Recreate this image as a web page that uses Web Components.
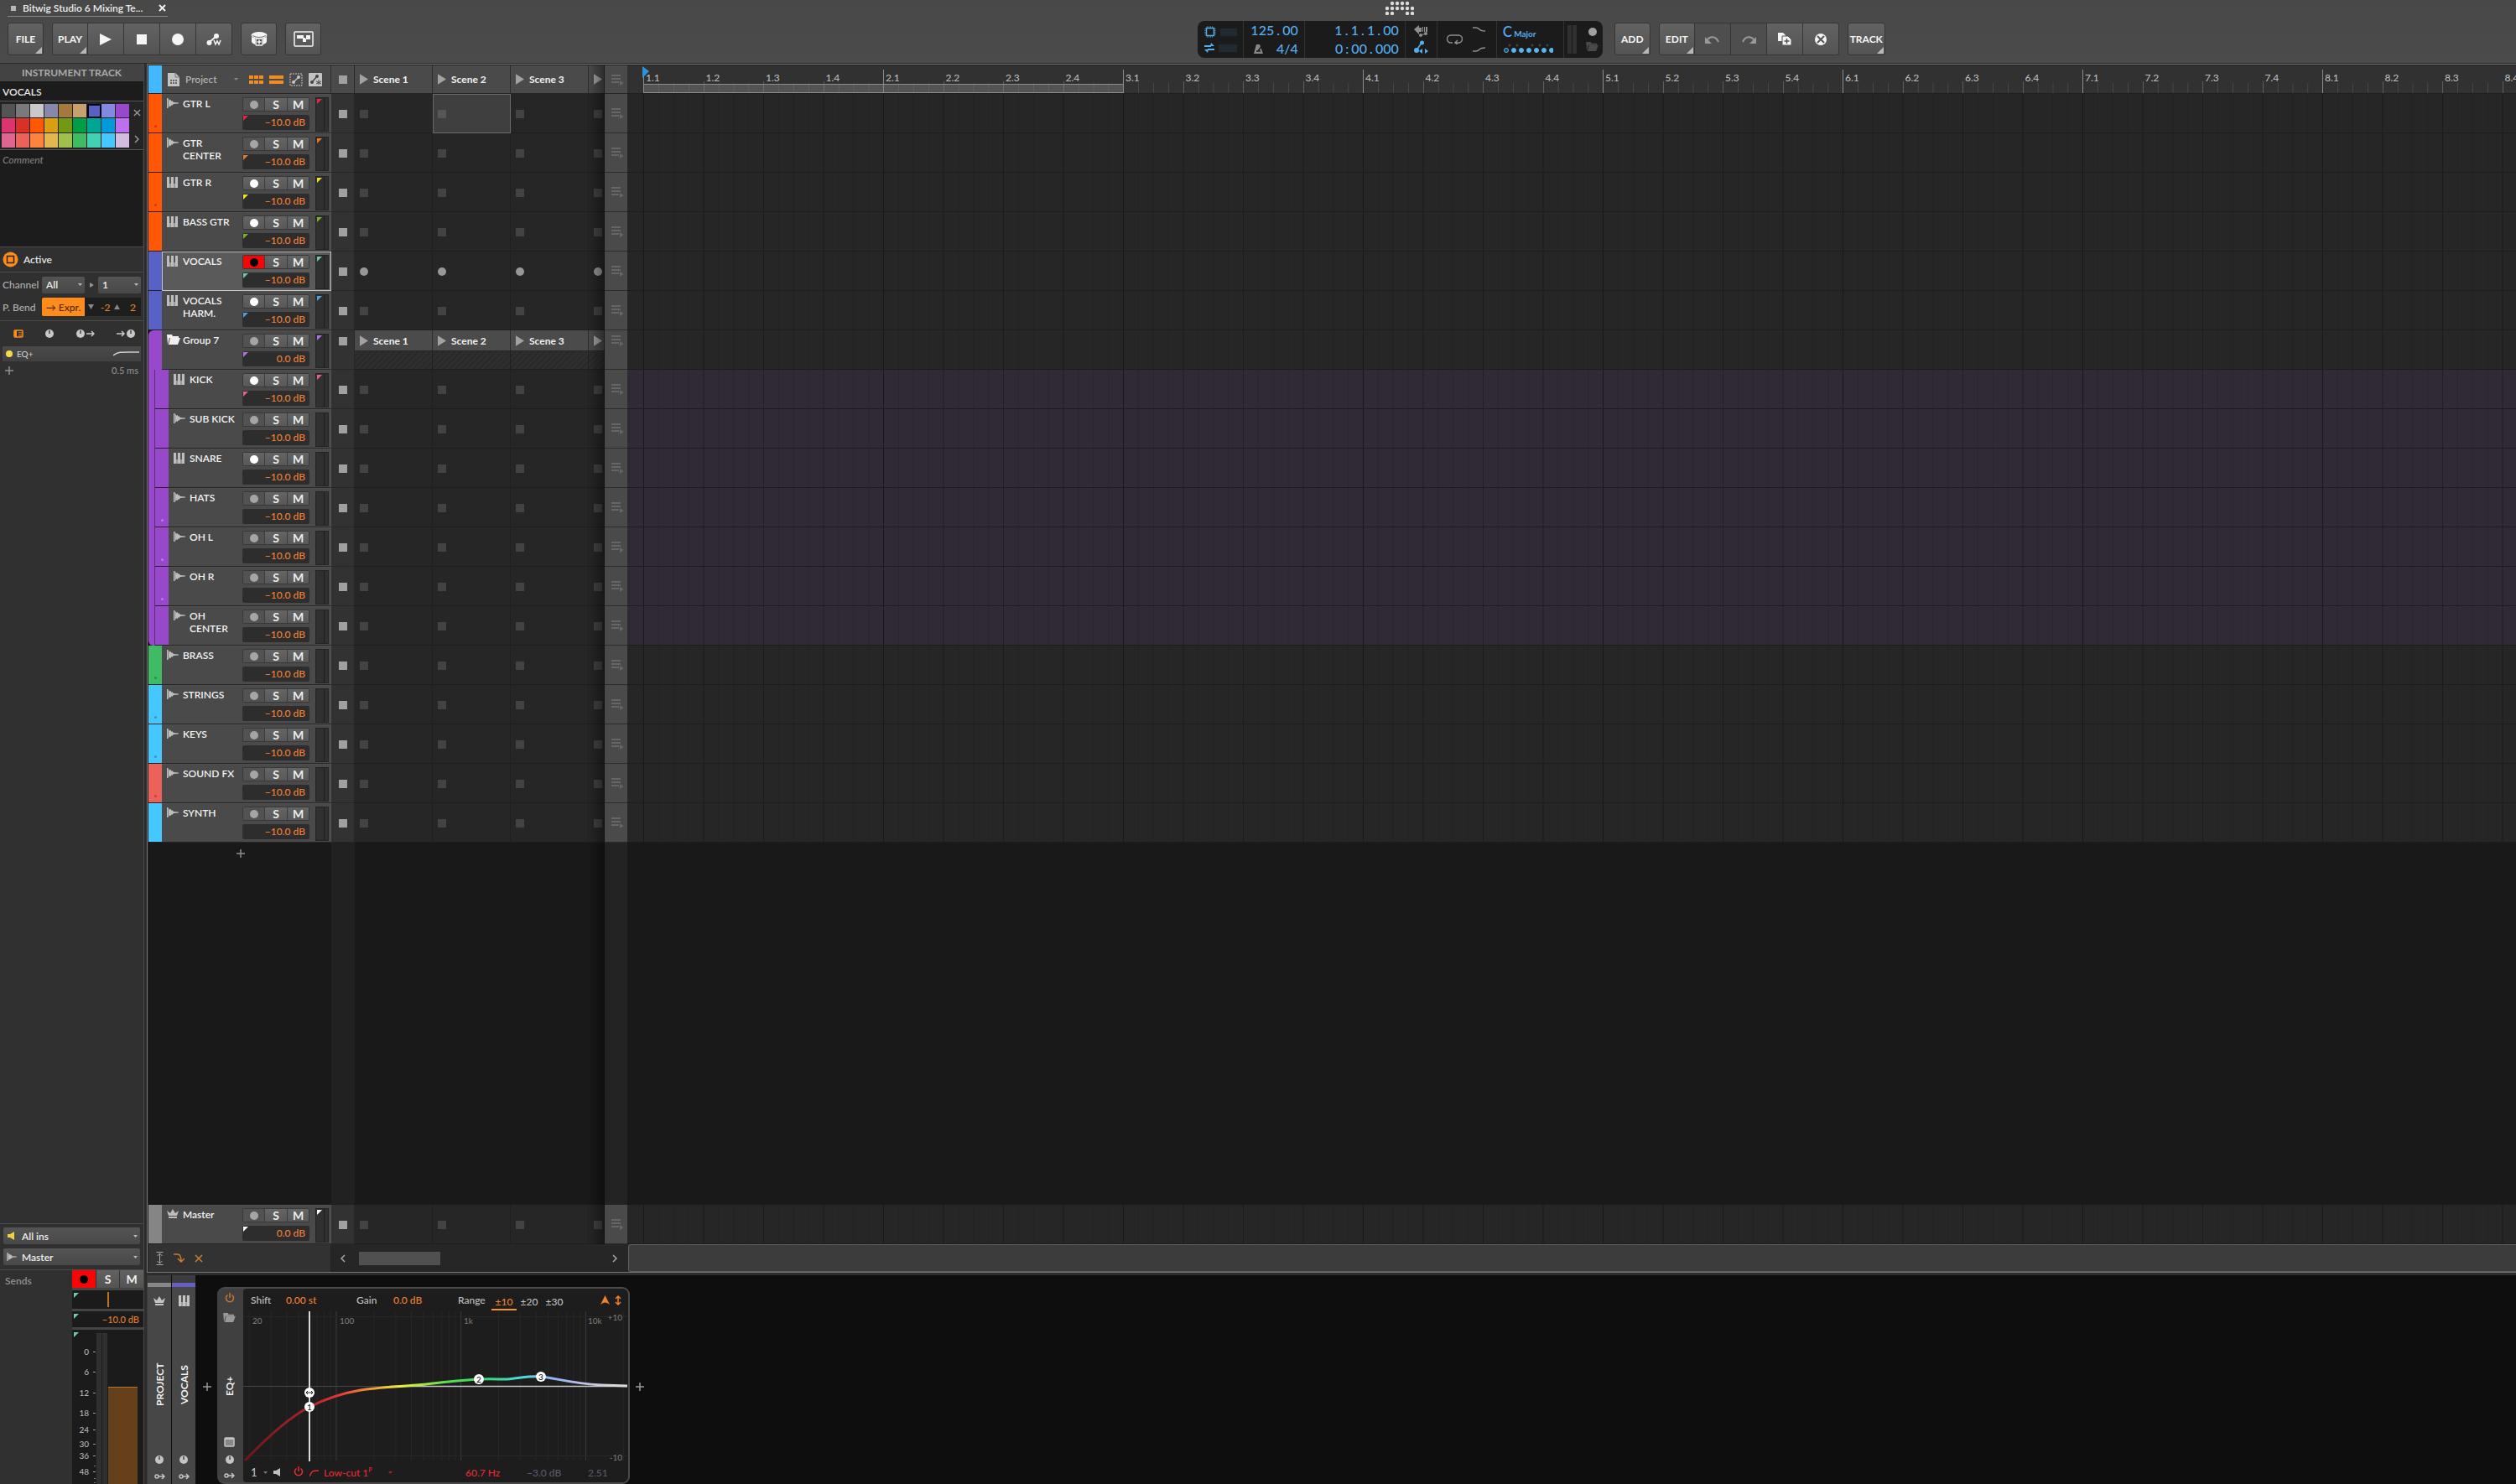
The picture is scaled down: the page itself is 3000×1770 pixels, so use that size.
<!DOCTYPE html>
<html lang="en">
<head>
<meta charset="utf-8">
<title>Bitwig Studio 6 Mixing Template</title>
<style>
html,body{margin:0;height:100%;overflow:hidden;background:#2c2c2c}
body{font:500 12px/15px Lato,"Open Sans",sans-serif;color:#e6e6e6}
</style>
</head>
<body>
<daw-app></daw-app>
<script>
const BASE = `
*{box-sizing:border-box}
button,input,select,textarea{font:inherit;color:inherit;margin:0;padding:0;border:0;background:none;border-radius:0;outline:0}
button{display:flex;align-items:center;justify-content:center;cursor:pointer}
svg{display:block}
`;
function define(name, css, html) {
  customElements.define(name, class extends HTMLElement {
    connectedCallback() {
      if (this.shadowRoot) return;
      const root = this.attachShadow({mode: 'open'});
      root.innerHTML = `<style>${BASE}${css}</style>` + (typeof html === 'function' ? html(this) : html);
    }
  });
}

/* ---------- icons ---------- */
const knob = (x, y) => `<circle cx="${x}" cy="${y}" r="5" fill="currentColor"/><path d="M${x} ${y}V${y-4}" stroke="#444" stroke-width="1.500"/>`;
const ICONS = {
  play: [14, 14, '<path d="M0 0L14 7L0 14z" fill="currentColor"/>'],
  stop: [12, 12, '<path d="M0 0h12v12H0z" fill="currentColor"/>'],
  rec: [14, 14, '<circle cx="7" cy="7" r="7" fill="currentColor"/>'],
  autow: [18, 16, '<path d="M3 12L12 4" stroke="currentColor" stroke-width="2"/><circle cx="3.500" cy="12" r="3" fill="currentColor"/><circle cx="12" cy="4" r="3" fill="currentColor"/><path d="M9 9l2 5l2-4l2 4l2-5" stroke="currentColor" fill="none" stroke-width="1.500"/>'],
  drum: [20, 17, '<ellipse cx="10" cy="4" rx="9.500" ry="4" fill="currentColor"/><path d="M2 4.500q8 4 16 0" stroke="#777" fill="none"/><path d="M1 6q9 4 18 0v6q-1 2-4 3V8H5v7q-3-1-4-3z" fill="currentColor"/><rect x="6" y="8" width="8" height="8" rx="1" fill="#505050" stroke="currentColor" stroke-width="1.500"/><path d="M10 9.500v5M7.500 12h5" stroke="currentColor" stroke-width="1.500"/>'],
  mixwin: [24, 19, '<rect x="1" y="1" width="22" height="17" rx="1" fill="none" stroke="currentColor" stroke-width="1.500"/><path d="M4 5h8v4H4z M15 5h5v5h-5z M12 8h2v1h1v4h-4V9h1z" fill="currentColor"/>'],
  undo: [18, 12, '<path d="M2 8C4 3 12 0 16 9" stroke="currentColor" stroke-width="2" fill="none"/><path d="M0 3v8h8z" fill="currentColor"/>'],
  redo: [18, 12, '<path d="M16 8C14 3 6 0 2 9" stroke="currentColor" stroke-width="2" fill="none"/><path d="M18 3v8h-8z" fill="currentColor"/>'],
  dup: [16, 15, '<path d="M0 0h6l3 3v7H0z" fill="currentColor"/><path d="M5 4h7l4 4v7H5z" fill="currentColor" stroke="#555" stroke-width="1"/><path d="M10.500 7v6M7.500 10h6" stroke="#555" stroke-width="1.500"/>'],
  del: [14, 14, '<circle cx="7" cy="7" r="7" fill="currentColor"/><path d="M3 3l8 8M11 3l-8 8" stroke="#555" stroke-width="2"/>'],
  wave: [14, 12, '<path d="M0 0h1.500v12H0z M2 1l2 2V1.500l2 2.500V3l2 2l6 .5v1L8 7L6 9V8l-2 2.500V9l-2 2z" fill="currentColor"/>'],
  piano: [13, 13, '<path d="M0 0h13v13H0z" fill="currentColor"/><path d="M3 0h2v8H3z M8 0h2v8H8z" fill="#555"/><path d="M4 8v5M9 8v5" stroke="#777"/>'],
  folder: [16, 12, '<path d="M0 0h6l1 2h7v2H3L1 12z" fill="currentColor"/><path d="M4 4h12l-3 8H2z" fill="currentColor"/>'],
  crown: [14, 11, '<path d="M0 2l4 3l3-5l3 5l4-3l-2 6H2z M2 9h10v2H2z" fill="currentColor"/>'],
  doc: [14, 16, '<path d="M0 0h9l5 5v11H0z" fill="currentColor"/><path d="M9 0v5h5" stroke="#777" fill="none"/><path d="M3 9h8M3 12h8" stroke="#666" stroke-width="2" stroke-dasharray="2 1"/>'],
  gridview: [17, 10, '<path d="M0 0h5v4H0zM6 0h5v4H6zM12 0h5v4h-5zM0 6h5v4H0zM6 6h5v4H6zM12 6h5v4h-5z" fill="#f28c1e"/>'],
  barview: [17, 10, '<path d="M0 0h17v4H0zM0 6h17v4H0z" fill="#f28c1e"/>'],
  autodash: [16, 16, '<rect x="1" y="1" width="14" height="14" fill="none" stroke="currentColor" stroke-dasharray="2 1"/><path d="M5 11L11 5" stroke="currentColor" stroke-width="1.500"/><circle cx="5" cy="11" r="2" fill="currentColor"/><circle cx="11" cy="5" r="2" fill="currentColor"/>'],
  autofill: [16, 16, '<rect width="16" height="16" rx="1" fill="currentColor"/><path d="M4 11L10 4" stroke="#444" stroke-width="1.500"/><circle cx="4" cy="11" r="2" fill="#444"/><circle cx="10" cy="4" r="2" fill="#444"/><path d="M12 8v6M9 10l6 3M15 10l-6 3" stroke="#444"/>'],
  list: [14, 14, '<path d="M0 1h11v2H0zM0 5h11v2H0zM0 9h9v2H0zM10 8l5 3l-5 3z" fill="currentColor"/>'],
  tri: [11, 14, '<path d="M0 0L11 7L0 14z" fill="currentColor"/>'],
  caret: [5, 3, '<path d="M0 0h5L2.500 3z" fill="currentColor"/>'],
  arrowdown: [7, 6, '<path d="M0 0h7L3.500 6z" fill="currentColor"/>'],
  arrowup: [7, 6, '<path d="M0 6h7L3.500 0z" fill="currentColor"/>'],
  close: [9, 9, '<path d="M1 1l7 7M8 1l-7 7" stroke="currentColor" stroke-width="2"/>'],
  thinx: [10, 10, '<path d="M1 1l8 8M9 1l-8 8" stroke="currentColor" stroke-width="1.500"/>'],
  right: [6, 10, '<path d="M1 1l4 4l-4 4" stroke="currentColor" stroke-width="1.500" fill="none"/>'],
  left: [6, 10, '<path d="M5 1L1 5l4 4" stroke="currentColor" stroke-width="1.500" fill="none"/>'],
  plus: [10, 10, '<path d="M5 0v10M0 5h10" stroke="currentColor" stroke-width="1.500"/>'],
  active: [19, 19, '<circle cx="9.500" cy="9.500" r="9" fill="#ff8c1a"/><rect x="5.500" y="5.500" width="8" height="8" fill="#ff8c1a" stroke="#2a2010" stroke-width="1.500"/>'],
  io: [12, 10, '<rect x="1" y="1" width="10" height="8" rx="1" fill="none" stroke="#ff8c1a" stroke-width="1.500"/><path d="M1 1h3v8H1z" fill="#ff8c1a"/><path d="M6 3.500h4M6 5.500h4M6 7.500h4" stroke="#c96e18"/>'],
  knob: [10, 10, knob(5, 5)],
  knobout: [22, 10, knob(5, 5) + '<path d="M12 5h9M18 2l3 3l-3 3" stroke="currentColor" fill="none" stroke-width="1.500"/>'],
  knobin: [22, 10, knob(17, 5) + '<path d="M0 5h9M6 2l3 3l-3 3" stroke="currentColor" fill="none" stroke-width="1.500"/>'],
  eqcurve: [31, 6, '<path d="M0 5C6 0 10 1 31 1" stroke="currentColor" stroke-width="1.500" fill="none"/>'],
  speaker: [8, 10, '<path d="M0 3h3l5-3v10L3 7H0z" fill="currentColor"/>'],
  height: [9, 16, '<path d="M.5 .5h8M.5 15.500h8" stroke="currentColor"/><path d="M4.500 2v12" stroke="currentColor"/><path d="M1.500 5L4.500 2L7.500 5M1.500 11L4.500 14L7.500 11" stroke="currentColor" fill="none"/>'],
  follow: [13, 12, '<path d="M0 1h5q4 0 4 9M5 6l4 4l4-4" stroke="currentColor" stroke-width="1.500" fill="none"/>'],
  power: [12, 12, '<path d="M3.500 2.500a4.500 4.500 0 1 0 5 0M6 0v6" stroke="currentColor" stroke-width="1.500" fill="none"/>'],
  window: [13, 12, '<rect x="1" y="1" width="11" height="10" rx="1" fill="#888" stroke="currentColor" stroke-width="1.500"/><path d="M1 1h11v2H1z" fill="currentColor"/>'],
  mod: [13, 8, '<circle cx="3" cy="4" r="2" fill="none" stroke="currentColor" stroke-width="1.500"/><path d="M5 4h7M9 1l3 3l-3 3" stroke="currentColor" stroke-width="1.500" fill="none"/>'],
  peak: [11, 11, '<path d="M0 11L5.500 0L11 11q-5.500-5-11 0z" fill="currentColor"/>'],
  updown: [8, 12, '<path d="M4 1v10M1 4l3-3l3 3M1 8l3 3l3-3" stroke="currentColor" stroke-width="1.500" fill="none"/>'],
  lowcut: [11, 8, '<path d="M0 8C3 1 4 1 11 1" stroke="currentColor" stroke-width="1.500" fill="none"/>'],
  chip: [14, 14, '<path d="M2.500 2.500h9v9h-9z" fill="none" stroke="currentColor" stroke-width="1.500"/><path d="M3 1h8M3 13h8M1 3v8M13 3v8" stroke="currentColor" stroke-dasharray="1 1"/>'],
  swap: [12, 12, '<path d="M0 3h8v2H0zM4 7h8v2H4z" fill="currentColor"/><path d="M8 0l4 4H7zM4 12L0 8h5z" fill="currentColor"/>'],
  metro: [12, 12, '<path d="M0 12L3 1h4l4 11z" fill="currentColor"/><path d="M5 9L10 2M3 9h5" stroke="#1c1c1c" stroke-width="1.500"/>'],
  overdub: [17, 14, '<path d="M0 5l6-5v3h3v5H6v3zM10 2h1v6h-1zM12 2h1v6h-1zM14 2h2v6h-2z" fill="currentColor"/><path d="M7 12l8-2" stroke="currentColor"/><circle cx="8" cy="12" r="2" fill="currentColor"/><circle cx="14" cy="10" r="2" fill="currentColor"/>'],
  autoblue: [17, 16, '<path d="M3 12L9 3" stroke="currentColor" stroke-width="1.500"/><circle cx="3" cy="12" r="3" fill="currentColor"/><circle cx="9.500" cy="3" r="2.500" fill="currentColor"/><path d="M6 13l4-3v6zM17 13l-4-3v6z" fill="currentColor"/>'],
  loop: [19, 12, '<path d="M7 10H5a4 4 0 0 1 0-9h9a4 4 0 0 1 0 9h-3M13 7l-3 3l3 2" stroke="currentColor" stroke-width="1.500" fill="none"/>'],
  punchin: [15, 6, '<path d="M0 1h4q2 0 4 2t7 2" stroke="currentColor" stroke-width="1.500" fill="none"/>'],
  punchout: [15, 6, '<path d="M0 5h4q2 0 4-2t7-2" stroke="currentColor" stroke-width="1.500" fill="none"/>'],
  scale: [60, 12, Array.from({length: 7}, (_, i) => `<circle cx="${4 + i * 9}" cy="8" r="2.500" fill="${i ? '#5bb5ee' : '#245'}" stroke="#5bb5ee"/>`).join('') + [8, 17, 35, 44, 53].map(x => `<circle cx="${x}" cy="2" r="1.500" fill="#444"/>`).join('')],
  logo: [34, 17, [[1,2,3,4], [0,1,2,3,4,5], [0,1,4,5]].map((r, y) => r.map(x => `<circle cx="${2 + x * 6}" cy="${3 + y * 6}" r="2.200" fill="currentColor"/>`).join('')).join('')]
};
define('ui-icon', ':host{display:inline-block;flex:none}', el => {
  const [w, h, body] = ICONS[el.getAttribute('name')];
  const s = +(el.getAttribute('size') || w), t = Math.round(h * s / w);
  return `<svg width="${s}" height="${t}" viewBox="0 0 ${w} ${h}" aria-hidden="true">${body}</svg>`;
});
const ic = (n, s, st) => `<ui-icon name="${n}"${s ? ` size="${s}"` : ''}${st ? ` style="${st}"` : ''}></ui-icon>`;

/* ---------- header ---------- */
define('tool-button', `
:host{display:block;width:43px;height:39px;flex:none}
:host([wide]){width:45px}
button{width:100%;height:100%;position:relative;font-weight:700;color:#f5f5f5;background:linear-gradient(#626262,#545454);border:1px solid #363636;border-left-width:0}
:host([first]) button{border-left-width:1px;border-radius:3px 0 0 3px}
:host([last]) button{border-radius:0 3px 3px 0}
:host([first][last]) button{border-radius:3px}
:host([off]) button{background:#4e4e4e;color:#999}
:host([menu]) button::after{content:"";position:absolute;right:1px;bottom:1px;border:4px solid;border-color:transparent #b8b8b8 #b8b8b8 transparent}
`, el => `<button${el.hasAttribute('label') ? ` aria-label="${el.getAttribute('label')}"` : ''}><slot></slot></button>`);

define('transport-display', `
:host{display:flex;height:44px;background:#1b1b1b;border-radius:8px;color:#55aef0;width:483px;overflow:hidden}
section{display:flex;flex-direction:column;justify-content:space-evenly;border-right:1px solid #333;padding:0 7px 0 8px}
section:last-child{border:0}
.r{display:flex;align-items:center;gap:5px}
.m{width:23px;height:9px;background:#1f2a31}
.n{font:500 16px/20px Lato,sans-serif;display:flex;justify-content:flex-end;align-items:center}
.n i{font-style:normal;display:inline-block;width:10px;text-align:center}
.g{color:#8e8e8e}
`, `
<section style="width:55px"><div class="r">${ic('chip')}<div class="m"></div></div><div class="r">${ic('swap')}<div class="m"></div></div></section>
<section style="width:73px"><div class="n">125<i>.</i>00</div><div class="n" style="justify-content:space-between;padding-left:4px">${ic('metro',0,'color:#888')}<span>4/4</span></div></section>
<section style="width:120px"><div class="n">1<i>.</i>1<i>.</i>1<i>.</i>00</div><div class="n">0<i>:</i>00<i>.</i>000</div></section>
<section style="width:38px;align-items:center">${ic('overdub',0,'color:#8e8e8e')}${ic('autoblue')}</section>
<section class="g" style="width:71px;flex-direction:row;justify-content:space-between;align-items:center;padding:0 13px 0 11px">${ic('loop')}<div style="display:grid;gap:18px">${ic('punchin')}${ic('punchout')}</div></section>
<section style="width:80px;padding:0 7px"><div><span style="font-size:17px">C</span> <span style="font-size:10px;font-weight:700;margin-left:-1px">Major</span></div>${ic('scale')}</section>
<section style="width:46px;flex-direction:row;align-items:center;gap:6px;padding:0"><div style="width:11px;height:34px;background:linear-gradient(90deg,#303030 5px,#1b1b1b 5px 6px,#303030 6px)"></div><div style="display:grid;gap:7px;justify-items:center;color:#4a4a4a">${ic('rec',10,'color:#a0a0a0')}${ic('folder',15)}</div></section>
`);

define('app-header', `
:host{display:grid;grid-template-columns:auto 25fr auto auto 18fr;grid-template-rows:21px 54px;background:linear-gradient(#484848,#4b4b4b);border-bottom:1px solid #2a2a2a}
.tab{margin-left:9px;width:191px;display:flex;align-items:center;gap:8px;padding:0 2px 0 4px;border-bottom:1px solid #858585;height:20px;font-weight:600;color:#ececec}
.tab button{margin-left:auto;color:#f0f0f0}
.logo{grid-column:3;justify-self:center;color:#dcdcdc;padding-top:1px}
.bar{display:flex;gap:10px;padding:6px 0 0}
.grp{display:flex}
`, `
<div class="tab">${ic('stop',6,'color:#b5b5b5')}<span>Bitwig Studio 6 Mixing Te...</span><button aria-label="Close tab">${ic('close')}</button></div>
<div class="logo">${ic('logo')}</div>
<div class="bar" style="grid-row:2;grid-column:1;padding-left:9px">
<tool-button first last menu>FILE</tool-button>
<div class="grp"><tool-button first menu>PLAY</tool-button><tool-button label="Play">${ic('play')}</tool-button><tool-button label="Stop">${ic('stop')}</tool-button><tool-button label="Record">${ic('rec')}</tool-button><tool-button last label="Automation write">${ic('autow')}</tool-button></div>
<tool-button first last label="Drum pads">${ic('drum')}</tool-button>
<tool-button first last label="Mixer">${ic('mixwin')}</tool-button>
</div>
<div style="grid-row:2;grid-column:3;padding-top:4px"><transport-display></transport-display></div>
<div class="bar" style="grid-row:2;grid-column:4;padding-left:14px">
<tool-button first last menu>ADD</tool-button>
<div class="grp"><tool-button first menu>EDIT</tool-button><tool-button off label="Undo">${ic('undo')}</tool-button><tool-button off label="Redo">${ic('redo')}</tool-button><tool-button label="Duplicate">${ic('dup')}</tool-button><tool-button last label="Delete">${ic('del')}</tool-button></div>
<tool-button first last menu wide>TRACK</tool-button>
</div>
`);

/* ---------- inspector ---------- */
define('ui-select', `
:host{display:flex;align-items:center;height:20px;background:linear-gradient(#545454,#484848);border-radius:2px;padding:0 3px 0 5px;gap:5px;color:#bbb;font-weight:600}
select{appearance:none;flex:1;min-width:0;height:20px;color:#eee}
::slotted(*){width:17px}
`, el => `<slot></slot><select aria-label="${el.getAttribute('label')}"><option>${el.getAttribute('value')}</option></select>${ic('caret')}`);

const PAL = ['#545454','#7a7a7a','#c9c9c9','#8689ac','#a3793f','#c6a070','#5761c6','#8489e0','#9849cb',
 '#db3570','#d93128','#ff5706','#d99f10','#739914','#009d47','#00a694','#0099d9','#bc70f0',
 '#e16591','#ec6158','#ff833e','#e4b74e','#a0c04d','#3ebb63','#43d1b4','#44c8ff','#d4bce0'];
define('color-palette', `
:host{display:flex;background:#242424;padding:3px 0 1px 2px;height:59px}
.g{display:grid;grid-template-columns:repeat(9,17px);grid-template-rows:17px 18px 18px}
.g button{border-right:1px solid #222;border-bottom:1px solid #222}
.g button.on{border:2px solid #080810}
.s{display:flex;flex-direction:column;justify-content:space-between;align-items:center;flex:1;padding:6px 2px;color:#999}
`, `<div class="g">${PAL.map((c, i) => `<button class="${i === 6 ? 'on' : ''}" style="background:${c}" aria-label="${c}"></button>`).join('')}</div><div class="s"><button aria-label="Reset">${ic('thinx',9)}</button><button aria-label="More">${ic('right')}</button></div>`);

define('channel-strip', `
:host{display:flex;height:256px;border-top:1px solid #4a4a4a}
.sends{flex:1;padding:5px 6px;color:#929292;font-weight:600}
.mix{width:85px;display:flex;flex-direction:column;background:#444;gap:3px}
.b{display:flex;height:21px;gap:1px;background:#333}
.b button{flex:1;background:linear-gradient(#626262,#535353);font:700 14px/20px Lato,sans-serif;color:#eee}
.b .a{background:#f80606;color:#000}
.d{background:#1b1b1b;position:relative;flex:none}
.d::before{content:"";position:absolute;left:2px;top:3px;border:3px solid;border-color:#6fc9a4 transparent transparent #6fc9a4}
.p{height:22px;display:flex;justify-content:center;align-items:center}
.p i{width:2px;height:18px;background:#b8742c}
.v{height:19px;text-align:right;padding:2px 5px;color:#e07e2a;font-size:11px}
.f{flex:1;min-height:0;overflow:hidden}
`, () => {
  const L = [[0,26],[6,50],[12,75],[18,99],[24,119],[30,136],[36,150],[48,169]];
  return `<div class="sends">Sends</div><div class="mix"><div class="b"><button class="a" aria-label="Arm">${ic('rec',10)}</button><button>S</button><button>M</button></div>
<div class="d p"><i></i></div><div class="d v">−10.0 dB</div><div class="d f"><svg width="85" height="187">
<path d="M29 4h6v190h-6zM36 4h6v190h-6z" fill="#303030"/><path d="M43 68h35v120H43z" fill="#66401a"/><path d="M43 68.500h35" stroke="#b8742c"/>
${L.map(([t, y]) => `<text x="20" y="${y+4}" text-anchor="end" font-size="10" fill="#b4b4b4">${t}</text><path d="M25 ${y}.5h3" stroke="#999"/>`).join('')}<path d="M26 162.500h2M26 177.500h2M26 182.500h2" stroke="#777"/></svg></div></div>`;
});

define('track-inspector', `
:host{display:flex;flex-direction:column;width:172px;background:#303030;border-right:1px solid #484848}
h2{margin:0;font:700 12px/21px Lato,sans-serif;text-align:center;color:#aaa;background:#434343}
input.name{height:23px;background:#1c1c1c;width:100%;padding:0 3px;font-weight:600;border-top:1px solid #1a1a1a}
color-palette{border-top:1px solid #555;border-bottom:1px solid #555}
textarea{display:block;width:170px;height:115px;background:#1c1c1c;resize:none;padding:4px 3px;font-style:italic}
textarea::placeholder{color:#7d7d7d;opacity:1}
.row{display:flex;align-items:center}
.sec{border-top:1px solid #4a4a4a}
.l{width:47px;color:#b0b0b0}
.expr{width:51px;height:22px;background:#ff8c1a;color:#4a2a08;border-radius:2px 0 0 2px}
.pb{display:flex;align-items:center;width:67px;height:22px;background:#1e1e1e;color:#e8801e;padding:0 6px 0 4px;gap:4px}
.pb span{flex:1;text-align:right}
.pb ui-icon{color:#888}
.ico{height:31px;justify-content:space-between;padding:0 10px 0 16px;color:#c8c8c8}
.eq{margin:0 3px;height:18px;background:linear-gradient(#4a4a4a,#404040);padding:0 2px 0 4px;gap:5px;color:#d0d0d0;font-size:10px}
.lat{padding:3px 6px;justify-content:space-between;color:#8e8e8e;font-size:11px}
.fill{flex:1}
`, `
<h2>INSTRUMENT TRACK</h2>
<input class="name" aria-label="Track name" value="VOCALS">
<color-palette></color-palette>
<textarea aria-label="Comment" placeholder="Comment"></textarea>
<div class="row sec" style="height:30px;padding-left:3px;gap:6px;font-weight:600">${ic('active')}Active</div>
<div class="sec" style="padding:4px 3px 4px;height:58px;display:grid;gap:4px">
<div class="row"><span class="l">Channel</span><ui-select label="Channel from" value="All" style="width:51px"></ui-select><span style="width:16px;display:flex;justify-content:center;color:#999">${ic('tri',5)}</span><ui-select label="Channel to" value="1" style="width:51px"></ui-select></div>
<div class="row"><span class="l">P. Bend</span><button class="expr">→ Expr.</button><div class="pb">${ic('arrowdown')}<span>-2</span>${ic('arrowup')}<span>2</span></div></div>
</div>
<div class="row sec ico">${ic('io')}${ic('knob')}${ic('knobout')}${ic('knobin')}</div>
<div class="row eq"><svg width="8" height="8"><circle cx="4" cy="4" r="4" fill="#f7d94c"/></svg><span>EQ+</span>${ic('eqcurve',0,'margin-left:auto')}</div>
<div class="row lat">${ic('plus')}<span>0.5 ms</span></div>
<div class="fill"></div>
<div class="sec" style="padding:4px;height:55px;display:grid;gap:5px;align-content:start">
<ui-select label="Input" value="All ins" style="padding-left:0;gap:0">${ic('speaker',8,'color:#f0d040;margin-left:5px')}</ui-select>
<ui-select label="Output" value="Master" style="padding-left:0;gap:0">${ic('wave',12,'margin-left:4px;margin-right:1px')}</ui-select></div>
<channel-strip></channel-strip>
`);

/* ---------- arranger ---------- */
define('bar-lane', `
:host{display:flex;flex:1;min-width:0;overflow:hidden;padding-left:19px;background:var(--lane,#262626);border-bottom:1px solid #1d1d1d}
div{flex:none;width:286px;background-image:linear-gradient(90deg,#181818 1px,transparent 1px),linear-gradient(90deg,rgba(0,0,0,.2) 1px,transparent 1px),linear-gradient(90deg,rgba(0,0,0,.1) 1px,transparent 1px);background-size:100% 100%,25% 100%,calc(100%/16) 100%}
`, '<div></div>'.repeat(8));

const play = (t) => `<button class="sc">${ic('tri',10)}<span>${t}</span></button>`;
const LAUNCH = `
.launch{display:grid;grid-template-columns:93px 93px 93px 19px;width:298px;flex:none;position:relative}
.launch::after{content:"";position:absolute;right:0;top:0;bottom:0;width:19px;background:linear-gradient(90deg,rgba(0,0,0,.02),rgba(0,0,0,.4));pointer-events:none}
.sc{justify-content:flex-start;gap:6px;padding-left:6px;font-weight:700;color:#f0f0f0;background:#4b4b4b;border-right:1px solid #2a2a2a;overflow:hidden;white-space:nowrap;min-width:0}
.sc ui-icon{color:#a2a2a2}
.stop{width:28px;flex:none;display:flex;align-items:center;justify-content:center;color:#a0a0a0;border-right:1px solid #262626}
.ls{width:27px;flex:none;display:flex;align-items:center;justify-content:center;background:#4a4a4a;color:#666;border-bottom:1px solid #2c2c2c;padding-left:2px}
`;
define('track-row', LAUNCH + `
:host{display:flex;height:47px;flex:none}
.strip{width:16px;flex:none;background:var(--c);border-bottom:1px solid #222;display:flex;align-items:flex-end;justify-content:center;padding-bottom:6px}
.strip i{width:3px;height:3px;border-radius:2px;background:rgba(0,0,0,.25)}
.outer{width:8px;flex:none;background:var(--c);border-right:1px solid #5b2c79}
:host([group]) .strip{border-radius:6px 0 0 0;border-bottom:0}
:host([kid]) .strip i{background:rgba(255,255,255,.3)}
:host([lastkid]) .outer{border-radius:0 0 0 6px}
.side{width:218px;display:flex;flex:none;background:#141414}
.head{flex:1;min-width:0;display:flex;background:#4a4a4a;border:1px solid #505050;border-bottom-color:#262626;padding:3px 2px 0 6px;border-left:0;color:#bdbdbd}
:host([sel]) .head{background:#5a5a5a;border:1px solid #c4c4c4;padding:3px 2px 0 5px}
.name{flex:1;min-width:0;padding-left:5px;color:#f2f2f2;font-weight:600}
.head>ui-icon{width:14px;padding-top:1px}
:host([group]) .head>ui-icon{color:#f0f0f0}
.ctl{width:80px;margin-right:7px}
.btn{display:grid;grid-template-columns:26px 27px 26px;height:17px;border:1px solid #383838;border-radius:2px;overflow:hidden}
.btn button{background:linear-gradient(#656565,#585858);font:700 14px/15px Lato,sans-serif;color:#ececec;border-right:1px solid #3c3c3c}
.btn button.off{background:#525252;color:#a5a5a5}.btn button.on{color:#fff}.btn button.arm{background:#fa0505;color:#000}
.db{position:relative;margin-top:4px;height:18px;background:#2d2d2d;border-radius:2px;text-align:right;padding:1px 5px 0;color:#ee8034}
.mk::before{content:"";position:absolute;left:1px;top:1px;border:3px solid;border-color:var(--m) transparent transparent var(--m)}
.mt{position:relative;width:16px;height:41px;background:linear-gradient(90deg,#303030 9px,#1f1f1f 9px 10px,#303030 10px);border:1px solid #242424}
.stop{background:#323232;border-bottom:1px solid #262626;padding-top:2px}
.slot{display:flex;align-items:center;padding:2px 0 0 6px;background:#262626;border-right:1px solid #202020;border-bottom:1px solid #1e1e1e;color:#434343;overflow:hidden}
.slot.hi{background:#3f3f3f;border:1px solid #6a6a6a;padding:1px 0 0 5px;color:#565656}
:host([sel]) .slot{color:#989898}
.hatch{border-right:1px solid #202020;border-top:1px solid #262626;border-bottom:1px solid #1e1e1e;background:repeating-linear-gradient(135deg,#2e2e2e 0 3px,#292929 3px 5px)}
:host([group]) .launch{grid-template-rows:24px 23px}
:host([group]) .stop,:host([group]) .ls{padding-bottom:22px}
`, el => {
  const a = n => el.getAttribute(n), has = n => el.hasAttribute(n);
  const mk = a('mark') ? 'mk' : '';
  const rec = has('sel') ? 'arm' : (a('icon') === 'piano' ? 'on' : 'off');
  const slots = has('group')
    ? play('Scene 1') + play('Scene 2') + play('Scene 3') + play('') + '<div class="hatch"></div>'.repeat(4)
    : [0,1,2,3].map(i => `<div class="slot ${has('hi') && i === 1 ? 'hi' : ''}">${ic(has('sel') ? 'rec' : 'stop', 10)}</div>`).join('');
  el.style.setProperty('--c', a('color'));
  el.style.setProperty('--m', a('mark') || 'transparent');
  if (has('kid')) el.style.setProperty('--lane', '#302936');
  return `<div class="side">${has('kid') ? '<div class="outer"></div>' : ''}<div class="strip">${has('dot') ? '<i></i>' : ''}</div>
<div class="head">${ic(a('icon'))}<div class="name">${a('label')}</div><div class="ctl"><div class="btn"><button class="${rec}" aria-label="Arm">${ic('rec',10)}</button><button>S</button><button>M</button></div><div class="db ${mk}">${a('db') || '−10.0 dB'}</div></div><div class="mt ${mk}"></div></div></div>
<div class="stop">${ic('stop',10)}</div><div class="launch">${slots}</div><div class="ls">${ic('list',14)}</div><bar-lane></bar-lane>`;
});

define('time-ruler', `
:host{display:flex;flex:1;min-width:0;overflow:hidden;background:#313131;padding-left:19px;position:relative;border-bottom:1px solid #202020}
.bar{flex:none;width:286px;display:flex;align-items:stretch}
.beat{flex:1;display:flex;align-items:flex-end;position:relative;background:linear-gradient(90deg,#5c5c5c 1px,transparent 1px) 0 100%/100% 14px no-repeat,linear-gradient(90deg,#464646 1px,transparent 1px) 0 100%/25% 12px repeat-x}
.bar .beat:first-child{background:linear-gradient(90deg,#8c8c8c 1px,transparent 1px) 0 100%/100% 28px no-repeat,linear-gradient(90deg,#464646 1px,transparent 1px) 0 100%/25% 12px repeat-x}
span{align-self:flex-start;padding:7px 0 0 3px;color:#bcbcbc}
.loop{position:absolute;left:19px;bottom:0;width:573px;height:11px;background:rgba(130,130,130,.42);border:1px solid #8c8c8c}
.mark{position:absolute;left:18px;top:1px;color:#2c93da}
`, () => [1,2,3,4,5,6,7,8].map(b => `<div class="bar">${[1,2,3,4].map(q => `<div class="beat"><span>${b}.${q}</span></div>`).join('')}</div>`).join('') + `<div class="loop"></div><svg class="mark" width="9" height="14"><path d="M0 0l8 6l-8 8z" fill="currentColor"/></svg>`);

const T = [
 ['GTR L','wave','#ff5706','#e02850','dot hi'],['GTR<br>CENTER','wave','#ff5706','#e07a28',''],['GTR R','piano','#ff5706','#f2e030','dot'],['BASS GTR','piano','#ff5706','#74b52a',''],
 ['VOCALS','piano','#5761c6','#6fc9a4','sel'],['VOCALS<br>HARM.','piano','#5761c6','#4f9fe0',''],['Group 7','folder','#9849cb','#b070e0','group db="0.0 dB"'],
 ['KICK','piano','#9849cb','#ea5c98','kid'],['SUB KICK','wave','#9849cb','','kid'],['SNARE','piano','#9849cb','','kid'],['HATS','wave','#9849cb','','kid dot'],['OH L','wave','#9849cb','','kid dot'],['OH R','wave','#9849cb','','kid dot'],['OH<br>CENTER','wave','#9849cb','','kid lastkid'],
 ['BRASS','wave','#3ebb63','','dot'],['STRINGS','wave','#44c8ff','','dot'],['KEYS','wave','#44c8ff','','dot'],['SOUND FX','wave','#ec6158','','dot'],['SYNTH','wave','#44c8ff','','']];
const row = ([l,i,c,m,x]) => `<track-row label="${l}" icon="${i}" color="${c}"${m ? ` mark="${m}"` : ''} ${x}></track-row>`;

define('arranger-view', LAUNCH + `
:host{display:flex;flex-direction:column;border:1px solid #757575;border-right:0;padding:1px 0 0 1px;background:#222}
.top{display:flex;height:34px;flex:none}
.top .stop,.top .sc,.top .ph,.top .ls{background:#4a4a4a;border-bottom:1px solid #262626}
.ph{width:202px;display:flex;align-items:center;padding:0 10px 0 7px;color:#c4c4c4;border-right:1px solid #303030}
.ph span{padding-left:7px;flex:1;color:#b8b8b8}
.ph .v{display:flex;gap:7px;align-items:center;padding-left:13px}
.fill{flex:1;min-height:0;display:flex;background:#191919}
.fill .a{width:218px;color:#8e8e8e;padding:6px 0 0 105px}
.fill .b{width:28px;background:#212121}
.fill .c{width:298px;position:relative}
.fill .d{width:27px;background:#232323}
.foot{display:flex;height:33px;flex:none}
.foot .a{width:218px;background:#323232;display:flex;align-items:center;gap:12px;padding-left:9px;color:#d07c2a;border-right:1px solid #222}
.foot .b{width:354px;background:#262626;display:flex;align-items:center;padding:0 13px 0 11px;color:#a8a8a8;gap:16px}
.foot .b div{flex:1}.foot .b i{display:block;width:97px;height:16px;background:#505050}
.foot .c{flex:1;background:#3c3c3c;border:1px solid #606060;border-radius:3px 0 0 3px;border-right:0}
`, `
<div class="top"><div style="width:16px;background:#41b8ff;border-bottom:1px solid #262626"></div><div class="ph">${ic('doc')}<span>Project</span>${ic('caret',5,'color:#888')}<div class="v">${ic('gridview')}${ic('barview')}${ic('autodash')}${ic('autofill')}</div></div>
<div class="stop">${ic('stop',10)}</div><div class="launch">${play('Scene 1')}${play('Scene 2')}${play('Scene 3')}${play('')}</div><div class="ls">${ic('list',14)}</div><time-ruler></time-ruler></div>
${T.map(row).join('')}
<div class="fill"><div class="a">${ic('plus')}</div><div class="b"></div><div class="c launch"></div><div class="d"></div></div>
${row(['Master','crown','#858585','#ffffff','db="0.0 dB"'])}
<div class="foot"><div class="a">${ic('height',0,'color:#aaa')}${ic('follow')}${ic('thinx')}</div><div class="b">${ic('left')}<div><i></i></div>${ic('right')}</div><div class="c"></div></div>
`);

/* ---------- devices ---------- */
define('chain-tab', `
:host{display:flex;flex-direction:column;align-items:center;width:28px;background:#474747;border-top:9px solid #3c3c3c;color:#c4c4c4}
.c{width:100%;height:5px;background:var(--c)}
.i{height:32px;display:flex;align-items:center}
b{flex:1;display:flex;align-items:center;justify-content:center;writing-mode:vertical-rl;transform:rotate(180deg);color:#f2f2f2;font-weight:700}
.k{display:grid;justify-items:center;gap:11px;padding-bottom:5px}
`, el => `<div class="c"></div><div class="i">${ic(el.getAttribute('icon'))}</div><b><slot></slot></b><div class="k">${ic('knob')}${ic('mod')}</div>`);

define('eq-graph', ':host{display:block}text{font-family:Lato,sans-serif}', () => {
  const x = f => 111 + Math.log10(f / 100) * 148.7;
  let g = '';
  for (const d of [10, 100, 1000, 10000]) for (let k = 1; k < 10; k++) {
    const f = d * k; if (f < 20 || f > 20000) continue;
    g += `<path d="M${x(f).toFixed(1)} 0V178" stroke="${k === 1 ? '#3c3c3c' : '#272727'}"/>`;
  }
  const dot = (cx, cy, t) => `<circle cx="${cx}" cy="${cy}" r="6" fill="#fff"/>` + (t ? `<text x="${cx}" y="${cy+3.5}" text-anchor="middle" font-size="10" fill="#222">${t}</text>` : `<path d="M${cx-4} ${cy}h8M${cx-2} ${cy-2}l-2 2l2 2M${cx+2} ${cy-2}l2 2l-2 2" stroke="#222" fill="none"/>`);
  return `<svg width="458" height="180"><defs><linearGradient id="g" gradientUnits="userSpaceOnUse" x1="0" x2="458" y1="0" y2="0"><stop offset="0" stop-color="#6e1519"/><stop offset=".17" stop-color="#a8252b"/><stop offset=".25" stop-color="#e03a36"/><stop offset=".32" stop-color="#f08a3a"/><stop offset=".41" stop-color="#efef3a"/><stop offset=".53" stop-color="#58e04a"/><stop offset=".62" stop-color="#2fdc66"/><stop offset=".72" stop-color="#4fd8d8"/><stop offset=".8" stop-color="#8fb4f4"/><stop offset=".9" stop-color="#c4bfe6"/><stop offset=".96" stop-color="#d8d8d8"/></linearGradient></defs>
${g}<path d="M0 6.500h458M0 172.500h458" stroke="#272727"/><path d="M0 89.500h458" stroke="#444"/><path d="M175 89.500h283" stroke="#c8c8c8" stroke-width="1.500"/>
<g font-size="10" fill="#777"><text x="11" y="15">20</text><text x="115" y="15">100</text><text x="263" y="15">1k</text><text x="411" y="15">10k</text><text x="452" y="11" text-anchor="end">+10</text><text x="452" y="178" text-anchor="end">-10</text></g>
<path d="M79 0V179" stroke="#d8d8d8" stroke-width="2"/>
<path d="M2 178C28 151 55 126 79 114S122 97 140 94S185 90 207 88S258 82 282 81S305 82 320 80.500S340 77 355 78S390 86 427 88L458 89" stroke="url(#g)" stroke-width="3" fill="none"/>
${dot(79,97)}${dot(79,114,1)}${dot(281,81,2)}${dot(355,78,3)}</svg>`;
});

define('eq-device', `
:host{display:flex;width:492px;margin-top:14px;background:#404040;border-radius:9px;border:2px solid #4a4a4a;border-left:0;overflow:hidden}
.s{width:31px;display:flex;flex-direction:column;align-items:center;color:#c4c4c4;padding-top:5px;padding-right:2px}
.s b{flex:1;display:flex;align-items:center;justify-content:center;writing-mode:vertical-rl;transform:rotate(180deg);color:#f2f2f2}
.m{flex:1;min-width:0;background:#1d1d1d;border-radius:4px;color:#c0c0c0;display:flex;flex-direction:column}
.t,.u{display:flex;align-items:center;padding-left:9px}
.t{height:27px}.u{height:24px}
.t>*,.u>*{flex:none}
.o{color:#f0802a}
.rg{display:flex}.rg button{width:30px;height:22px;margin-top:3px}.rg .on{color:#f0802a;border-bottom:2px solid #f0952e;padding-top:2px}
.r{color:#e8292f}.d{color:#5a5a6c}
sup{font-size:7px;line-height:1px}
`, `
<div class="s">${ic('power',12,'color:#c9742c')}<div style="height:12px"></div>${ic('folder',15,'color:#999')}<div style="height:16px"></div><b>EQ+</b>${ic('window')}<div style="height:10px"></div>${ic('knob')}<div style="height:10px"></div>${ic('mod')}<div style="height:4px"></div></div>
<div class="m"><div class="t"><span style="width:42px">Shift</span><span class="o" style="width:84px">0.00 st</span><span style="width:44px">Gain</span><span class="o" style="width:77px">0.0 dB</span><span style="width:40px">Range</span><div class="rg"><button class="on">±10</button><button>±20</button><button>±30</button></div><span class="o" style="margin-left:auto;padding-right:8px;display:flex;gap:6px;align-items:center">${ic('peak')}${ic('updown')}</span></div>
<eq-graph></eq-graph>
<div class="u"><span style="width:15px;font-size:13px">1</span>${ic('caret',5,'color:#777')}<span style="width:31px;padding-left:7px">${ic('speaker')}</span><span class="r" style="width:19px">${ic('power')}</span><span class="r" style="width:17px">${ic('lowcut')}</span><span class="r" style="width:77px">Low-cut 1<sup>P</sup></span>${ic('caret',5,'color:#a82428')}<span class="r" style="margin-left:87px;width:73px">60.7 Hz</span><span class="d" style="width:73px">−3.0 dB</span><span class="d">2.51</span></div></div>
`);

define('device-panel', `
:host{display:flex;height:249px;background:#0e0e0e;border-left:1px solid #3a3a3a;gap:1px}
.p{width:24px;display:flex;align-items:center;justify-content:center;color:#999;padding:16px 0 0 2px}
.p:last-child{width:20px}
`, `
<chain-tab icon="crown" style="--c:#888">PROJECT</chain-tab><chain-tab icon="piano" style="--c:#655fc4">VOCALS</chain-tab>
<div class="p">${ic('plus')}</div><eq-device></eq-device><div class="p">${ic('plus')}</div>
`);

define('daw-app', `
:host{display:flex;flex-direction:column;height:100vh;background:#2c2c2c}
.main{flex:1;min-height:0;display:flex;gap:3px}
.right{flex:1;min-width:0;display:flex;flex-direction:column;gap:3px}
arranger-view{flex:1;min-height:0}
`, `<app-header></app-header><div class="main"><track-inspector></track-inspector><div class="right"><arranger-view></arranger-view><device-panel></device-panel></div></div>`);
</script>
</body>
</html>
